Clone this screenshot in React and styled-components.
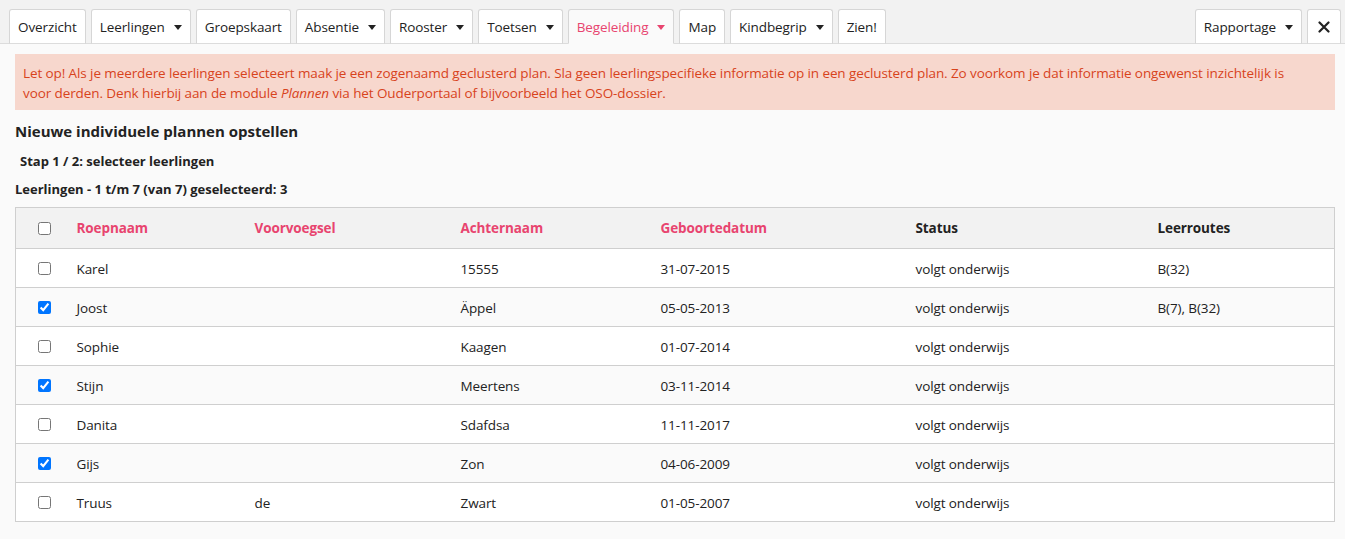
import React from "react";
import styled, { createGlobalStyle } from "styled-components";

const GlobalStyle = createGlobalStyle`
  html, body {
    margin: 0;
    padding: 0;
    background: #fafafa;
    font-family: "Open Sans", "Noto Sans", sans-serif;
    color: #222;
  }
`;

const TabBar = styled.div`
  display: flex;
  align-items: flex-end;
  gap: 5px;
  height: 44px;
  padding: 0 4px 0 9px;
  background: #f2f2f2;
  border-bottom: 1px solid #dcdcdc;
  box-sizing: border-box;
`;

const Spacer = styled.div`
  flex: 1;
`;

const Tab = styled.div`
  display: flex;
  align-items: center;
  justify-content: center;
  gap: 9px;
  height: 35px;
  margin-bottom: -1px;
  padding: 0 ${(p) => (p.$icon ? "10px" : "8px")};
  box-sizing: border-box;
  background: ${(p) => (p.$active ? "#fafafa" : "#fff")};
  border: 1px solid #d6d6d6;
  border-bottom-color: ${(p) => (p.$active ? "#fafafa" : "#dcdcdc")};
  border-radius: 3px 3px 0 0;
  font-size: 13.5px;
  color: ${(p) => (p.$active ? "#e8446f" : "#222")};
  letter-spacing: -0.1px;
  white-space: nowrap;
`;

const Caret = styled.span`
  width: 0;
  height: 0;
  border-left: 4px solid transparent;
  border-right: 4px solid transparent;
  border-top: 5px solid currentColor;
  margin-top: 1px;
`;

const Content = styled.div`
  padding: 10px 10px 20px 15px;
`;

const Alert = styled.div`
  background: #f7d7cd;
  color: #d8431c;
  font-size: 13.5px;
  line-height: 20px;
  padding: 9px 8px 7px 8px;
  letter-spacing: -0.1px;
  margin-bottom: 10px;

  em {
    font-style: italic;
  }
`;

const AlertText = styled.p`
  margin: 0;
  max-width: 1285px;
`;

const Title = styled.h2`
  margin: 0;
  font-size: 15px;
  font-weight: 700;
  line-height: 22px;
`;

const Step = styled.div`
  font-size: 13px;
  font-weight: 700;
  line-height: 18px;
  margin: 10px 0 0 5px;
`;

const Count = styled.div`
  font-size: 13px;
  font-weight: 700;
  line-height: 18px;
  margin: 10px 0 9px 0;
`;

const Table = styled.table`
  width: 1320px;
  border-collapse: collapse;
  table-layout: fixed;
  border: 1px solid #cfcfcf;
  font-size: 13.5px;
  letter-spacing: -0.1px;
`;

const HeadRow = styled.tr`
  background: #f2f2f2;
  height: 41px;
`;

const Th = styled.th`
  text-align: left;
  font-weight: 700;
  padding: 0 12px;
  color: ${(p) => (p.$sortable ? "#e8446f" : "#222")};
  border-bottom: 1px solid #cfcfcf;
`;

const Row = styled.tr`
  height: 39px;
  background: ${(p) => (p.$odd ? "#fafafa" : "#fff")};
  border-bottom: 1px solid #cfcfcf;
`;

const Td = styled.td`
  padding: 2px 12px 0;
  white-space: nowrap;
`;

const CheckCell = styled.td`
  padding: 0 0 0 22px;
`;

const CheckHead = styled.th`
  padding: 0 0 0 22px;
  text-align: left;
  border-bottom: 1px solid #cfcfcf;
`;

const Check = styled.input.attrs({ type: "checkbox" })`
  width: 13px;
  height: 13px;
  margin: 0;
  display: block;
`;

const tabs = [
  { label: "Overzicht" },
  { label: "Leerlingen", menu: true },
  { label: "Groepskaart" },
  { label: "Absentie", menu: true },
  { label: "Rooster", menu: true },
  { label: "Toetsen", menu: true },
  { label: "Begeleiding", menu: true, active: true },
  { label: "Map" },
  { label: "Kindbegrip", menu: true },
  { label: "Zien!" },
];

const students = [
  { first: "Karel", prefix: "", last: "15555", birth: "31-07-2015", routes: "B(32)", checked: false },
  { first: "Joost", prefix: "", last: "Äppel", birth: "05-05-2013", routes: "B(7), B(32)", checked: true },
  { first: "Sophie", prefix: "", last: "Kaagen", birth: "01-07-2014", routes: "", checked: false },
  { first: "Stijn", prefix: "", last: "Meertens", birth: "03-11-2014", routes: "", checked: true },
  { first: "Danita", prefix: "", last: "Sdafdsa", birth: "11-11-2017", routes: "", checked: false },
  { first: "Gijs", prefix: "", last: "Zon", birth: "04-06-2009", routes: "", checked: true },
  { first: "Truus", prefix: "de", last: "Zwart", birth: "01-05-2007", routes: "", checked: false },
];

export default function App() {
  return (
    <>
      <GlobalStyle />
      <TabBar>
        {tabs.map((t) => (
          <Tab key={t.label} $active={t.active}>
            {t.label}
            {t.menu && <Caret />}
          </Tab>
        ))}
        <Spacer />
        <Tab>
          Rapportage
          <Caret />
        </Tab>
        <Tab $icon>
          <svg width="12" height="12" viewBox="0 0 12 12">
            <path d="M1.5 1.5 L10.5 10.5 M10.5 1.5 L1.5 10.5" stroke="#222" strokeWidth="2.2" strokeLinecap="round" />
          </svg>
        </Tab>
      </TabBar>

      <Content>
        <Alert>
          <AlertText>
            Let op! Als je meerdere leerlingen selecteert maak je een zogenaamd geclusterd plan. Sla geen
            leerlingspecifieke informatie op in een geclusterd plan. Zo voorkom je dat informatie ongewenst
            inzichtelijk is voor derden. Denk hierbij aan de module <em>Plannen</em> via het Ouderportaal of
            bijvoorbeeld het OSO-dossier.
          </AlertText>
        </Alert>

        <Title>Nieuwe individuele plannen opstellen</Title>
        <Step>Stap 1 / 2: selecteer leerlingen</Step>
        <Count>Leerlingen - 1 t/m 7 (van 7) geselecteerd: 3</Count>

        <Table>
          <colgroup>
            <col style={{ width: 49 }} />
            <col style={{ width: 178 }} />
            <col style={{ width: 206 }} />
            <col style={{ width: 200 }} />
            <col style={{ width: 255 }} />
            <col style={{ width: 242 }} />
            <col />
          </colgroup>
          <thead>
            <HeadRow>
              <CheckHead>
                <Check />
              </CheckHead>
              <Th $sortable>Roepnaam</Th>
              <Th $sortable>Voorvoegsel</Th>
              <Th $sortable>Achternaam</Th>
              <Th $sortable>Geboortedatum</Th>
              <Th>Status</Th>
              <Th>Leerroutes</Th>
            </HeadRow>
          </thead>
          <tbody>
            {students.map((s, i) => (
              <Row key={s.first} $odd={i % 2 === 1}>
                <CheckCell>
                  <Check defaultChecked={s.checked} />
                </CheckCell>
                <Td>{s.first}</Td>
                <Td>{s.prefix}</Td>
                <Td>{s.last}</Td>
                <Td>{s.birth}</Td>
                <Td>volgt onderwijs</Td>
                <Td>{s.routes}</Td>
              </Row>
            ))}
          </tbody>
        </Table>
      </Content>
    </>
  );
}
